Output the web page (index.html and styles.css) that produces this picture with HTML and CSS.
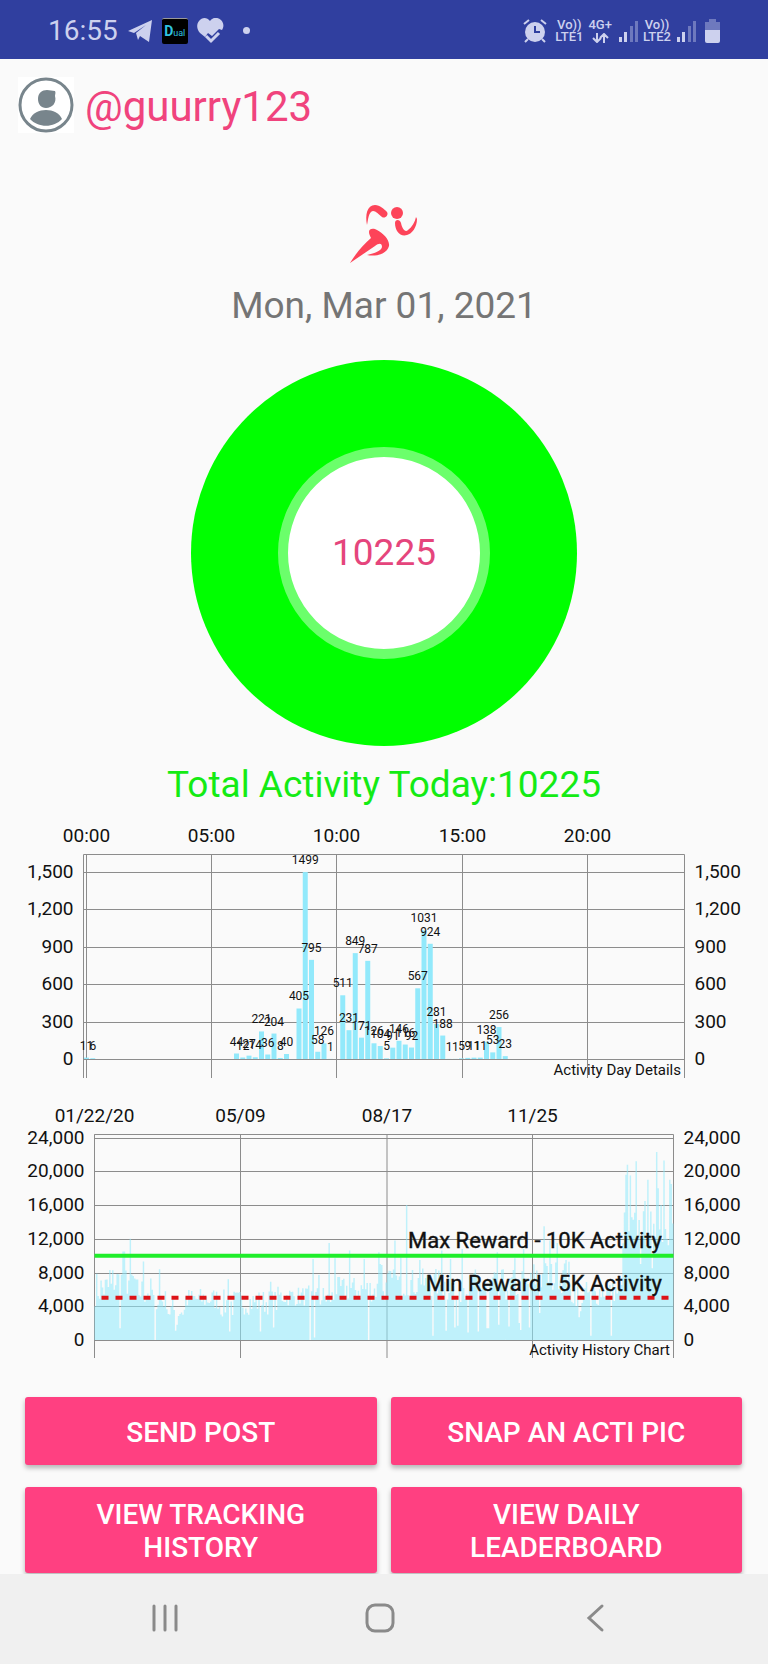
FILE: index.html
```
<!DOCTYPE html>
<html lang="en">
<head>
    <meta charset="UTF-8">
    <meta name="viewport" content="width=device-width, initial-scale=1">
    <title>Activity</title>
    <link rel="stylesheet" href="styles.css">
</head>
<body>
    <div class="status-bar">
        <div class="status-left">
            <span class="clock">16:55</span>
            <svg class="icon-telegram" width="24" height="24" viewBox="0 0 24 24">
                <path d="M0 12 L24 1 L21 23 L12 17 L10 21 L8 14 L18 6 L6 14 Z"/>
            </svg>
            <span class="dual-app"><b>D</b>ual</span>
            <svg class="icon-heart" width="27" height="26" viewBox="0 0 27 26">
                <path d="M13 3 C10 -1 5 -1 2 3 C-1 7 0 12 3 15 L8 19 L11 15 L15 18 L22 11 L25 12 C27 9 27 5 24 2 C21 -1 16 -1 13 3 Z"/>
                <path class="check" d="M9 18 L14 23 L22 15"/>
            </svg>
            <span class="dot"></span>
        </div>
        <div class="status-right">
            <svg class="icon-alarm" width="24" height="24" viewBox="0 0 24 24">
                <circle cx="12" cy="13" r="10"/>
                <path class="line" d="M1 5 L6 1 M18 1 L23 5 M5 20 L2 23 M19 20 L22 23"/>
                <path class="hands" d="M12 7 V13 H17"/>
            </svg>
            <span class="lte"><span>Vo))</span><span>LTE1</span></span>
            <span class="lte data">
                <span>4G+</span>
                <svg width="17" height="10" viewBox="0 0 17 10">
                    <path d="M5 0 V8 M1 5 L5 9 L9 5 M12 10 V2 M8 5 L12 1 L16 5"/>
                </svg>
            </span>
            <svg class="icon-signal" width="20" height="22" viewBox="0 0 20 22">
                <path d="M1 17 h3 v5 h-3z M6 12 h3 v10 h-3z"/>
                <path class="dim" d="M12 6 h3 v16 h-3z M17 1 h3 v21 h-3z"/>
            </svg>
            <span class="lte"><span>Vo))</span><span>LTE2</span></span>
            <svg class="icon-signal" width="20" height="22" viewBox="0 0 20 22">
                <path d="M1 17 h3 v5 h-3z M6 12 h3 v10 h-3z"/>
                <path class="dim" d="M12 6 h3 v16 h-3z M17 1 h3 v21 h-3z"/>
            </svg>
            <svg class="icon-battery" width="15" height="24" viewBox="0 0 15 24">
                <path class="dim" d="M4 0 H11 V3 H15 V11 H0 V3 H4 Z"/>
                <path d="M0 11 H15 V22 Q15 24 13 24 H2 Q0 24 0 22 Z"/>
            </svg>
        </div>
    </div>

    <header class="profile">
        <svg class="avatar" width="56" height="56" viewBox="0 0 56 56">
            <circle class="ring" cx="28" cy="28" r="26"/>
            <path d="M37 14 C38 16 37 17 37 19 C39 26 34 31 28 31 C23 31 20 27 20 22 C20 16 24 13 29 13 C32 13 34 14 37 14 Z"/>
            <path d="M12 42 C17 30 39 30 44 42 C36 51 20 51 12 42 Z"/>
        </svg>
        <span class="username">@guurry123</span>
    </header>

    <main>
        <section class="today">
            <svg class="runner" width="70" height="60" viewBox="0 0 70 60">
                <circle cx="48" cy="9" r="6"/>
                <path d="M18 21 C16 11 18 1 26 1 C31 1 35 5 38 8 C40 11 36 15 33 13 C29 10 25 5 22 8 C19 11 19 17 18 21 Z"/>
                <path d="M46 19 C46 15 51 15 52 19 C53 24 56 29 59 26 C63 23 66 18 67 13 L68 15 C68 23 63 30 58 31 C51 33 46 27 46 19 Z"/>
                <path d="M20 28 C20 24 25 24 28 26 C34 29 41 36 40 42 C38 50 27 53 18 51 C26 49 32 47 33 43 C33 39 30 39 26 42 L1 59 C7 49 15 40 22 34 C21 32 20 30 20 28 Z"/>
            </svg>
            <h1 class="date">Mon, Mar 01, 2021</h1>
            <div class="donut"><div class="donut-hole">10225</div></div>
            <p class="total">Total Activity Today:10225</p>
        </section>

        <svg class="chart" id="dayChart" viewBox="0 0 768 280" role="img" aria-label="Activity Day Details"></svg>
        <svg class="chart" id="historyChart" viewBox="0 0 768 280" role="img" aria-label="Activity History Chart"></svg>

        <div class="actions">
            <button type="button">Send Post</button>
            <button type="button">Snap an Acti Pic</button>
            <button type="button">View Tracking History</button>
            <button type="button">View Daily Leaderboard</button>
        </div>
    </main>

    <nav class="nav-bar">
        <button type="button" aria-label="Recent apps">
            <svg width="30" height="30" viewBox="0 0 30 30"><path d="M4 3 V27 M15 3 V27 M26 3 V27"/></svg>
        </button>
        <button type="button" aria-label="Home">
            <svg width="30" height="30" viewBox="0 0 30 30"><rect x="2" y="2" width="26" height="26" rx="8"/></svg>
        </button>
        <button type="button" aria-label="Back">
            <svg width="30" height="30" viewBox="0 0 30 30"><path d="M22 3 L9 15 L22 27"/></svg>
        </button>
    </nav>

    <script src="charts.js"></script>
</body>
</html>
```
FILE: styles.css
```
body {
    display: flex;
    flex-direction: column;
    min-height: 100vh;
    margin: 0;
    background-color: #fafafa;
    font-family: Roboto, sans-serif;
}
main {
    flex: 1;
}

/* status bar */
.status-bar {
    display: flex;
    justify-content: space-between;
    align-items: center;
    height: 59px;
    box-sizing: border-box;
    padding: 2px 48px 0;
    background-color: #303f9f;
    color: #cdd1ee;
}
.status-bar svg {
    fill: #cdd1ee;
}
.status-left, .status-right {
    display: flex;
    align-items: center;
}
.clock {
    font-size: 28px;
    line-height: 32px;
}
.icon-telegram {
    margin-left: 10px;
}
.dual-app {
    width: 26px;
    height: 26px;
    margin: 0 9px 0 10px;
    border-radius: 2px;
    box-sizing: border-box;
    border-top: 1px solid #999;
    background-color: #000;
    color: #2fc3e0;
    font-size: 9px;
    line-height: 24px;
    text-align: center;
    white-space: nowrap;
}
.dual-app b {
    font-size: 14px;
}
.icon-heart .check {
    fill: none;
    stroke: #cdd1ee;
    stroke-width: 3;
}
.dot {
    width: 7px;
    height: 7px;
    margin-left: 19px;
    border-radius: 50%;
    background-color: #cdd1ee;
}
.icon-alarm .line {
    stroke: #cdd1ee;
    stroke-width: 2;
}
.icon-alarm .hands {
    fill: none;
    stroke: #303f9f;
    stroke-width: 2;
}
.lte {
    display: flex;
    flex-direction: column;
    align-items: center;
    margin: 0 5px 0 8px;
    font-size: 13px;
    font-weight: 500;
    line-height: 12px;
}
.lte.data {
    margin: 0 6px 0 0;
}
.lte.data svg {
    margin-top: 2px;
    fill: none;
    stroke: #cdd1ee;
    stroke-width: 2;
}
.icon-signal + .lte {
    margin-left: 5px;
}
.dim {
    opacity: 0.4;
}
.icon-battery {
    margin-left: 9px;
}

/* user */
.profile {
    display: flex;
    align-items: flex-start;
    padding: 18px 18px 0;
}
.avatar {
    background-color: #fff;
    fill: #78858c;
}
.avatar .ring {
    fill: none;
    stroke: #78858c;
    stroke-width: 3;
}
.username {
    margin-left: 11px;
    color: #f0437d;
    font-size: 42px;
    line-height: 60px;
}

/* today */
.today {
    display: flex;
    flex-direction: column;
    align-items: center;
    padding-top: 67px;
}
.runner {
    fill: #fd4459;
}
.date {
    margin: 20px 0 32px;
    color: #757575;
    font-size: 37px;
    font-weight: 400;
    line-height: 44px;
}
.donut {
    display: flex;
    align-items: center;
    justify-content: center;
    width: 386px;
    height: 386px;
    border-radius: 50%;
    background-color: #00ff00;
}
.donut-hole {
    width: 192px;
    height: 192px;
    border: 10px solid #6bff6b;
    border-radius: 50%;
    background-color: #fff;
    color: #e5457c;
    font-size: 37px;
    line-height: 192px;
    text-align: center;
}
.total {
    margin: 17px 0 3px;
    color: #14eb14;
    font-size: 37px;
    line-height: 44px;
}

/* charts */
.chart {
    display: block;
    width: 100%;
    font-size: 19px;
    fill: #111;
}
.chart .grid {
    stroke: #8c8c8c;
    stroke-width: 1;
}
.chart .bar {
    fill: #92e9fb;
}
.chart .history-bar {
    fill: #8eeafb;
    opacity: 0.55;
}
.chart .value {
    font-size: 12px;
}
.chart .description {
    font-size: 15px;
}
.chart .limit-label {
    font-size: 22px;
    stroke: #111;
    stroke-width: 0.4;
}
.chart .max-line {
    stroke: #1fee2a;
    stroke-width: 4;
}
.chart .min-line {
    stroke: #dd1317;
    stroke-width: 4;
    stroke-dasharray: 7 7;
}

/* buttons */
.actions {
    display: grid;
    grid-template-columns: 1fr 1fr;
    gap: 22px 14px;
    padding: 27px 26px 1px 25px;
}
.actions button {
    min-height: 68px;
    padding: 11px 40px 9px;
    border: none;
    border-radius: 3px;
    background-color: #ff4081;
    box-shadow: 0 3px 5px rgba(0, 0, 0, 0.28);
    color: #fff;
    font-family: inherit;
    font-size: 28px;
    font-weight: 500;
    line-height: 33px;
    text-transform: uppercase;
    cursor: pointer;
}

/* bottom navigation */
.nav-bar {
    display: flex;
    justify-content: space-between;
    align-items: center;
    height: 90px;
    box-sizing: border-box;
    padding: 0 158px 2px 150px;
    background-color: #f0f0f0;
    position: relative;
}
.nav-bar button {
    padding: 0;
    border: none;
    background: none;
    line-height: 0;
    cursor: pointer;
}
.nav-bar svg {
    fill: none;
    stroke: #8a8a8a;
    stroke-width: 3;
    stroke-linecap: round;
}
```
FILE: charts.js
```
const SVG_NS = 'http://www.w3.org/2000/svg';

// plot area shared by both charts
const TOP = 44.5;
const TAIL = 268;

function add(svg, tag, attrs, text) {
    const el = document.createElementNS(SVG_NS, tag);
    for (const key in attrs) {
        el.setAttribute(key, attrs[key]);
    }
    if (text !== undefined) {
        el.textContent = text;
    }
    svg.appendChild(el);
    return el;
}

function line(svg, x1, y1, x2, y2, cls) {
    add(svg, 'line', { x1, y1, x2, y2, class: cls || 'grid' });
}

function drawAxes(svg, o) {
    line(svg, o.left, TOP, o.right, TOP);
    line(svg, o.left, TOP, o.left, TAIL);
    line(svg, o.right, TOP, o.right, TAIL);
    for (let v = 0; v <= o.max; v += o.step) {
        const y = o.zero - v * o.scale;
        line(svg, o.left, Math.round(y) + 0.5, o.right, Math.round(y) + 0.5);
        add(svg, 'text', { x: o.left - 10, y: y + 6, 'text-anchor': 'end' }, v.toLocaleString('en-US'));
        add(svg, 'text', { x: o.right + 10, y: y + 6 }, v.toLocaleString('en-US'));
    }
    o.ticks.forEach(([x, label]) => {
        line(svg, x, TOP, x, TAIL);
        add(svg, 'text', { x, y: 32, 'text-anchor': 'middle' }, label);
    });
}

// steps per quarter of an hour: [slot, count]
const daySteps = [
    [0, 11], [1, 6], [24, 44], [25, 12], [26, 27], [27, 14], [28, 221], [29, 36],
    [30, 204], [31, 8], [32, 40], [34, 405], [35, 1499], [36, 795], [37, 58],
    [38, 126], [39, 1], [41, 511], [42, 231], [43, 849], [44, 171], [45, 787],
    [46, 126], [47, 104], [48, 5], [49, 91], [50, 146], [51, 116], [52, 92],
    [53, 567], [54, 1031], [55, 924], [56, 281], [57, 188], [58, 1], [59, 1],
    [60, 5], [61, 9], [62, 11], [63, 11], [64, 138], [65, 53], [66, 256], [67, 23]
];

function drawDay() {
    const svg = document.getElementById('dayChart');
    const zero = 249;
    const scale = 0.1247;
    const first = 86.5;
    const slot = 6.25;
    drawAxes(svg, {
        left: 83.5, right: 684.5, zero, scale, max: 1500, step: 300,
        ticks: [[86.5, '00:00'], [211.5, '05:00'], [336.5, '10:00'], [462.5, '15:00'], [587.5, '20:00']]
    });
    daySteps.forEach(([i, v]) => {
        add(svg, 'rect', { x: first + i * slot - 2.5, y: zero - v * scale, width: 5, height: v * scale, class: 'bar' });
    });
    daySteps.forEach(([i, v]) => {
        add(svg, 'text', { x: first + i * slot, y: zero - v * scale - 8, 'text-anchor': 'middle', class: 'value' }, v);
    });
    add(svg, 'text', { x: 681, y: 265, 'text-anchor': 'end', class: 'description' }, 'Activity Day Details');
}

// usual range of a stretch of days, in thousands: [last day, low, high]
const ranges = [
    [12, 4, 8.2], [28, 5, 9], [40, 4, 7.5], [50, 3.5, 6], [62, 2, 5], [85, 3.5, 6.2],
    [100, 2.5, 6], [125, 3, 6], [145, 4, 6.4], [165, 3.5, 6.5], [200, 4.5, 7.5],
    [236, 5, 8.5], [300, 4.5, 8.5], [325, 5.5, 9.5], [345, 4, 7], [361, 4.5, 7],
    [397, 11, 15.5]
];

// days that stand out from their stretch
const outliers = {
    10: 8.3, 17: 1.4, 19: 10.5, 20: 10.5, 24: 12, 33: 9.3, 41: 0, 44: 8.4, 55: 1.1, 56: 1.8,
    91: 7.2, 92: 1, 113: 1, 120: 6.9, 122: 1.5, 147: 0, 149: 9.6, 150: 0.3, 153: 7.7, 160: 11.5,
    164: 9.7, 174: 10.6, 184: 9.6, 187: 0, 194: 10.4, 195: 9, 196: 8.9, 205: 11.8, 209: 9.8,
    213: 16, 222: 9.5, 231: 0.5, 237: 10.6, 240: 1.1, 243: 9.6, 246: 1.5, 248: 1.7, 251: 10.8,
    255: 0.9, 262: 1, 268: 1.4, 269: 1.4, 275: 10.4, 276: 1.8, 283: 1.6, 287: 9.7, 290: 2,
    291: 1.2, 293: 10.8, 297: 1.5, 304: 3.2, 307: 13.5, 311: 11.8, 316: 11.5, 322: 9.5,
    331: 2.7, 332: 3.4, 339: 0.5, 353: 0.5, 363: 19.6, 364: 20.8, 366: 19.5, 370: 21.2,
    373: 9, 376: 16.5, 378: 19, 381: 8.5, 382: 13.8, 384: 22.3, 385: 18, 387: 16, 389: 21.3,
    393: 19, 394: 18.5
};

function historySteps() {
    const days = [];
    let seed = 7;
    for (let i = 0; i < 396; i++) {
        seed = (seed * 16807) % 2147483647;
        const range = ranges.find(r => i < r[0]);
        const usual = range[1] + (range[2] - range[1]) * (seed / 2147483647);
        days.push(i in outliers ? outliers[i] : usual);
    }
    return days;
}

function drawHistory() {
    const svg = document.getElementById('historyChart');
    const left = 94.5;
    const right = 673.5;
    const zero = 250;
    const scale = 0.00843;
    drawAxes(svg, {
        left, right, zero, scale, max: 24000, step: 4000,
        ticks: [[94.5, '01/22/20'], [240.5, '05/09'], [387, '08/17'], [532.5, '11/25']]
    });
    const day = (right - left) / 396;
    let d = '';
    historySteps().forEach((v, i) => {
        const h = v * 1000 * scale;
        d += `M${(left + i * day).toFixed(2)} ${zero}v${-h.toFixed(1)}h${day.toFixed(2)}v${h.toFixed(1)}z`;
    });
    add(svg, 'path', { d, class: 'history-bar' });
    line(svg, left, zero - 10000 * scale, right, zero - 10000 * scale, 'max-line');
    line(svg, left + 7, zero - 5000 * scale, right, zero - 5000 * scale, 'min-line');
    add(svg, 'text', { x: 662, y: 158, 'text-anchor': 'end', class: 'limit-label' }, 'Max Reward - 10K Activity');
    add(svg, 'text', { x: 662, y: 201, 'text-anchor': 'end', class: 'limit-label' }, 'Min Reward - 5K Activity');
    add(svg, 'text', { x: 670, y: 265, 'text-anchor': 'end', class: 'description' }, 'Activity History Chart');
}

drawDay();
drawHistory();
```
